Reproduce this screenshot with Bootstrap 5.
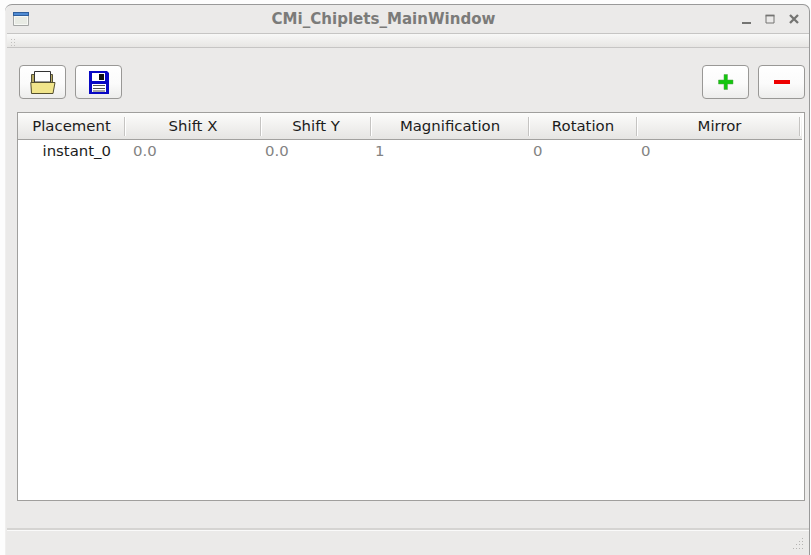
<!DOCTYPE html>
<html lang="en">
<head>
<meta charset="utf-8">
<title>CMi_Chiplets_MainWindow</title>
<link href="https://cdn.jsdelivr.net/npm/bootstrap@5.3.0/dist/css/bootstrap.min.css" rel="stylesheet">
<style>
body{width:811px;height:555px;background:#fdfdfd;font-family:"DejaVu Sans",sans-serif;font-size:14.9px;line-height:18px;color:#1c1c1c;padding:4px 1px 0 5px}
.win{height:551px;background:#ebeae9;border:solid #999;border-width:1px 1px 0 0;border-radius:7px 7px 0 0;box-shadow:inset 1px 0 #f0efee}
.win svg{display:block;flex:none}
.titlebar{height:28px;padding:0 10px 0 8px}
.title-text{font-weight:bold;font-size:15.05px;color:#7b7b79;white-space:nowrap;margin:-1px 0 0 -4px}
.toolstrip{height:15px;margin-left:2px;padding:5px 0 0 3px;border:solid #c6c5c4;border-width:1px 0;background:linear-gradient(#f8f8f7,#e7e6e4)}
.actions{height:64px;padding:17px 4px 0 14px;gap:9px}
.tool{width:47px;height:34px;padding:0;border:1px solid #999896;border-radius:4px;background:linear-gradient(#fff,#fbfbfb 55%,#ededec);display:flex;align-items:center;justify-content:center}
.sheet{margin:0 4px 0 12px;height:389px;border:1px solid #a09f9d;background:#fff}
.grid-row{display:grid;width:784px;grid-template-columns:107px 136px 110px 158px 108px 165px}
.head{height:27px;border-bottom:1px solid #a2a19f;background:linear-gradient(#fcfcfb,#e6e5e3);text-align:center}
.head>div{position:relative;padding-top:4px}
.head>div::after{content:"";position:absolute;right:-1px;top:4px;width:2px;height:19px;background:linear-gradient(90deg,#c5c4c2 50%,#fff 50%)}
.head>div:last-child::after{right:1px}
.values{color:#838383;padding-top:2px}
.values>div{padding-left:4px}
.values>.name{color:#1c1c1c;padding:0 14px 0 0;text-align:right}
.values>.first{padding-left:8px}
.status{margin:27px 0 0 2px;border-top:2px solid #d5d4d2;box-shadow:inset 0 1px #fafafa;height:27px;padding:8px 4px 0 0}
</style>
</head>
<body class="m-0 overflow-hidden">
<div class="win d-flex flex-column">
  <header class="titlebar d-flex align-items-center justify-content-between">
    <svg width="16" height="14"><path d="M.5 1v12.500h15V1" fill="#e8ebe4" stroke="#a5a7a6"/><path d="M0 0h16v4H0z" fill="#2f5f9c"/><path d="M1 1h14v2H1z" fill="#4f8bd3"/><path d="M1.500 12.500v-8h13v8z" fill="none" stroke="#f7f8f5"/></svg>
    <div class="title-text flex-grow-1 text-center">CMi_Chiplets_MainWindow</div>
    <svg width="57" height="12" fill="none" stroke="#747472"><path d="M0 10h9" stroke-width="2"/><path d="M24 2.500h8v7.500h-8z"/><path d="M23.500 2.500h9" stroke-width="1.800"/><path d="M48 2l8 8M56 2l-8 8" stroke-width="2.300"/></svg>
  </header>
  <div class="toolstrip"><svg width="6" height="8" fill="#c2c1bf"><path d="M1 0h1v1H1zM4 0h1v1H4zM1 3h1v1H1zM4 3h1v1H4zM1 6h1v1H1zM4 6h1v1H4z"/></svg></div>
  <div class="actions d-flex align-items-start">
    <button class="tool" aria-label="Open"><svg width="26" height="25"><path d="M1.500 23V4.500H22.500v8" fill="#b6aa62" stroke="#55523a"/><path d="M4.500 12V1.500h16V12z" fill="#fff" stroke="#333"/><path d="M.8 12.500h24.200L23 23.500H1.500z" fill="#f1e58b" stroke="#54502f"/></svg></button>
    <button class="tool" aria-label="Save"><svg width="20" height="23"><path d="M0 0h18l2 2v21H0z" fill="#0808c4"/><path d="M3 2h13v8H3zM3 13h14v8H3z" fill="#fff"/><path d="M10 3h5v6h-5z" fill="#111"/><path d="M4 14.500h12M4 17.500h12M4 20h12" stroke="#555"/></svg></button>
    <button class="tool ms-auto" aria-label="Add"><svg width="16" height="16"><path d="M6 .5h3.500v5.500h5.500v4H9.500v5.500H6V10H.5V6H6z" fill="#12c60d" stroke="#55a04c" stroke-width=".5"/></svg></button>
    <button class="tool" aria-label="Remove"><svg width="16" height="5"><path d="M0 0h16v4H0z" fill="#ee0000"/></svg></button>
  </div>
  <main class="sheet">
    <div class="grid-row head"><div>Placement</div><div>Shift X</div><div>Shift Y</div><div>Magnification</div><div>Rotation</div><div>Mirror</div></div>
    <div class="grid-row values"><div class="name">instant_0</div><div class="first">0.0</div><div>0.0</div><div>1</div><div>0</div><div>0</div></div>
  </main>
  <footer class="status d-flex justify-content-end"><svg width="13" height="13" fill="#b5b4b2"><path d="M10 0h1v1h-1zM7 3h1v1H7zM10 3h1v1h-1zM4 6h1v1H4zM7 6h1v1H7zM10 6h1v1h-1zM1 10h1v1H1zM4 10h1v1H4zM7 10h1v1H7zM10 10h1v1h-1z"/></svg></footer>
</div>
<script src="https://cdn.jsdelivr.net/npm/bootstrap@5.3.0/dist/js/bootstrap.bundle.min.js"></script>
</body>
</html>
